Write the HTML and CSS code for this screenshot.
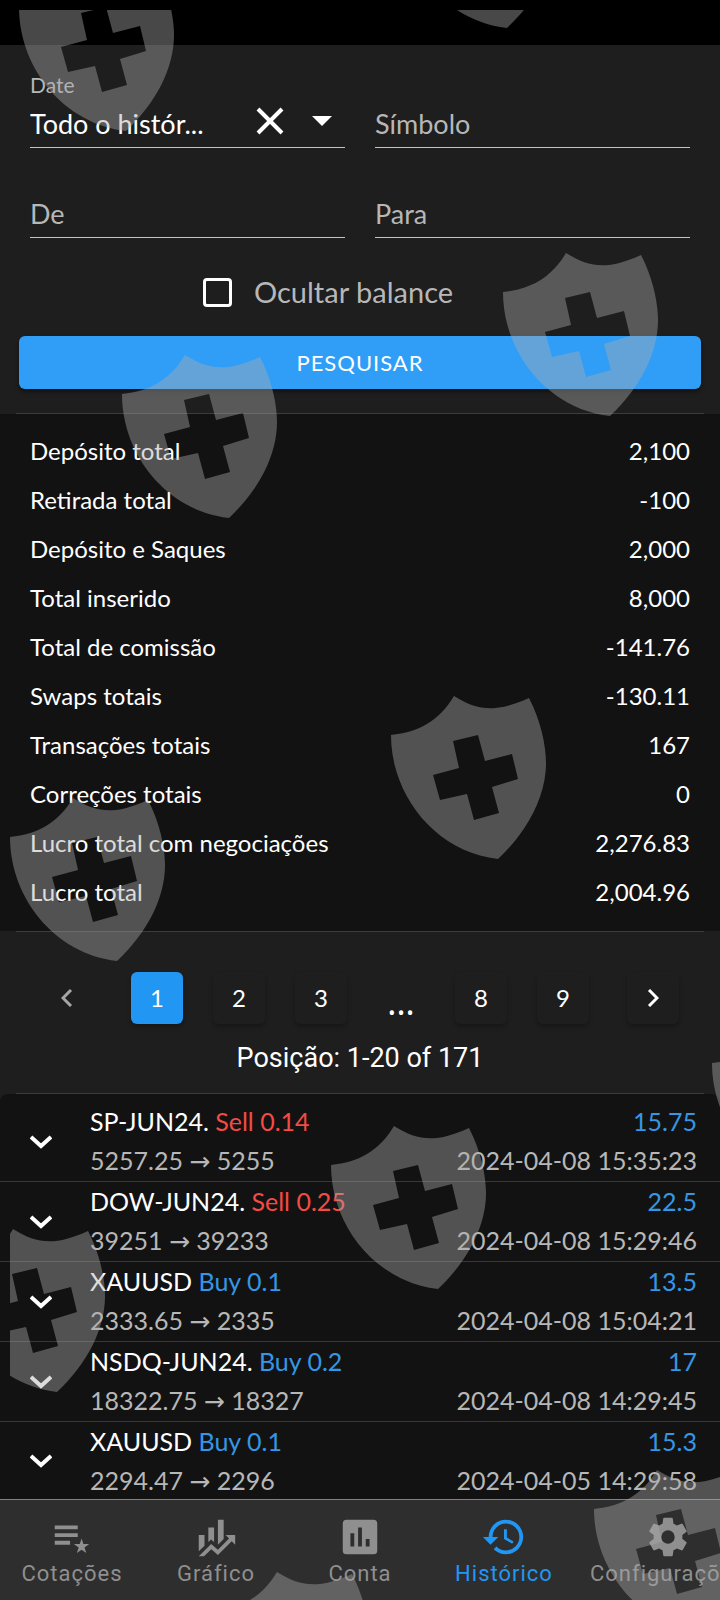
FILE: index.html
```html
<!DOCTYPE html>
<html lang="pt">
<head>
<meta charset="utf-8">
<meta name="viewport" content="width=device-width, initial-scale=1">
<title>Histórico</title>
<link rel="stylesheet" href="styles.css">
</head>
<body>
<div class="app">
  <div class="status-bar"></div>
  <main class="content">
    <form class="filters">
      <div class="fields">
        <div class="field">
          <label class="field-label" for="date">Date</label>
          <div class="field-row">
            <select class="field-select" id="date"><option>Todo o histór...</option></select>
            <button class="icon-button" type="button" aria-label="Limpar">
              <svg class="clear-icon" viewBox="0 0 28 28"><path d="M2 2 26 26M26 2 2 26"/></svg>
            </button>
            <svg class="caret-icon" viewBox="0 0 20 10" aria-hidden="true"><path d="M0 0h20L10 10z"/></svg>
          </div>
        </div>
        <div class="field"><input class="field-input" type="text" placeholder="Símbolo" aria-label="Símbolo"></div>
        <div class="field"><input class="field-input" type="text" placeholder="De" aria-label="De"></div>
        <div class="field"><input class="field-input" type="text" placeholder="Para" aria-label="Para"></div>
      </div>
      <label class="check"><input class="check-box" type="checkbox">Ocultar balance</label>
      <button class="search" type="button">PESQUISAR</button>
    </form>

    <hr class="divider">
    <dl class="summary">
      <div class="sum-row"><dt>Depósito total</dt><dd>2,100</dd></div>
      <div class="sum-row"><dt>Retirada total</dt><dd>-100</dd></div>
      <div class="sum-row"><dt>Depósito e Saques</dt><dd>2,000</dd></div>
      <div class="sum-row"><dt>Total inserido</dt><dd>8,000</dd></div>
      <div class="sum-row"><dt>Total de comissão</dt><dd>-141.76</dd></div>
      <div class="sum-row"><dt>Swaps totais</dt><dd>-130.11</dd></div>
      <div class="sum-row"><dt>Transações totais</dt><dd>167</dd></div>
      <div class="sum-row"><dt>Correções totais</dt><dd>0</dd></div>
      <div class="sum-row"><dt>Lucro total com negociações</dt><dd>2,276.83</dd></div>
      <div class="sum-row"><dt>Lucro total</dt><dd>2,004.96</dd></div>
    </dl>
    <hr class="divider">

    <section class="paging">
      <div class="pages">
        <button class="page page-prev" type="button" disabled aria-label="Anterior"><svg class="page-icon" viewBox="0 0 12 18"><path d="M10 1 2 9l8 8"/></svg></button>
        <button class="page page-current" type="button">1</button>
        <button class="page" type="button">2</button>
        <button class="page" type="button">3</button>
        <span class="dots">...</span>
        <button class="page" type="button">8</button>
        <button class="page" type="button">9</button>
        <button class="page page-next" type="button" aria-label="Próxima"><svg class="page-icon" viewBox="0 0 12 18"><path d="m2 1 8 8-8 8"/></svg></button>
      </div>
      <p class="position">Posição: 1-20 of 171</p>
    </section>
    <hr class="divider">

    <ul class="deals">
      <li class="deal">
        <button class="expand" type="button" aria-label="Detalhes"><svg class="expand-icon" viewBox="0 0 22 14"><path d="m1 2 10 9 10-9"/></svg></button>
        <div class="deal-main"><p>SP-JUN24. <span class="sell">Sell 0.14</span></p><p class="muted">5257.25 <span class="arrow">→</span> 5255</p></div>
        <div class="deal-side"><p class="buy">15.75</p><p class="muted">2024-04-08 15:35:23</p></div>
      </li>
      <li class="deal">
        <button class="expand" type="button" aria-label="Detalhes"><svg class="expand-icon" viewBox="0 0 22 14"><path d="m1 2 10 9 10-9"/></svg></button>
        <div class="deal-main"><p>DOW-JUN24. <span class="sell">Sell 0.25</span></p><p class="muted">39251 <span class="arrow">→</span> 39233</p></div>
        <div class="deal-side"><p class="buy">22.5</p><p class="muted">2024-04-08 15:29:46</p></div>
      </li>
      <li class="deal">
        <button class="expand" type="button" aria-label="Detalhes"><svg class="expand-icon" viewBox="0 0 22 14"><path d="m1 2 10 9 10-9"/></svg></button>
        <div class="deal-main"><p>XAUUSD <span class="buy">Buy 0.1</span></p><p class="muted">2333.65 <span class="arrow">→</span> 2335</p></div>
        <div class="deal-side"><p class="buy">13.5</p><p class="muted">2024-04-08 15:04:21</p></div>
      </li>
      <li class="deal">
        <button class="expand" type="button" aria-label="Detalhes"><svg class="expand-icon" viewBox="0 0 22 14"><path d="m1 2 10 9 10-9"/></svg></button>
        <div class="deal-main"><p>NSDQ-JUN24. <span class="buy">Buy 0.2</span></p><p class="muted">18322.75 <span class="arrow">→</span> 18327</p></div>
        <div class="deal-side"><p class="buy">17</p><p class="muted">2024-04-08 14:29:45</p></div>
      </li>
      <li class="deal">
        <button class="expand" type="button" aria-label="Detalhes"><svg class="expand-icon" viewBox="0 0 22 14"><path d="m1 2 10 9 10-9"/></svg></button>
        <div class="deal-main"><p>XAUUSD <span class="buy">Buy 0.1</span></p><p class="muted">2294.47 <span class="arrow">→</span> 2296</p></div>
        <div class="deal-side"><p class="buy">15.3</p><p class="muted">2024-04-05 14:29:58</p></div>
      </li>
    </ul>
  </main>

  <nav class="nav">
    <a class="nav-item" href="#cotacoes"><svg class="nav-icon" viewBox="0 0 24 24"><path d="M3 6h12v2H3zM3 10h12v2H3zM3 14h8v2H3zM17 12.8l.94 2.9H21l-2.48 1.8.95 2.9L17 18.6l-2.47 1.8.95-2.9L13 15.7h3.06z"/></svg>Cotações</a>
    <a class="nav-item" href="#grafico"><svg class="nav-icon" viewBox="0 0 24 24"><path d="M6 16.5 3 19.44V11h3M11 14.66l-1.57-1.34L8 14.64V7h3M16 13l-3 3V3h3M18.81 12.81 17 11h5v5l-1.79-1.79L13 21.36l-3.47-3.02L5.75 22H3l6.47-6.34L13 18.64"/></svg>Gráfico</a>
    <a class="nav-item" href="#conta"><svg class="nav-icon" viewBox="0 0 24 24"><path d="M9 17H7v-7h2m4 7h-2V7h2m4 10h-2v-4h2m2-10H5a2 2 0 0 0-2 2v14a2 2 0 0 0 2 2h14a2 2 0 0 0 2-2V5a2 2 0 0 0-2-2z" fill-rule="evenodd"/></svg>Conta</a>
    <a class="nav-item nav-active" href="#historico"><svg class="nav-icon" viewBox="0 0 24 24"><path d="M13.5 8H12v5l4.28 2.54.72-1.21-3.5-2.08V8M13 3a9 9 0 0 0-9 9H1l3.96 4.03L9 12H6a7 7 0 1 1 7 7c-1.93 0-3.68-.79-4.94-2.06l-1.42 1.42A8.96 8.96 0 0 0 13 21a9 9 0 0 0 0-18"/></svg>Histórico</a>
    <a class="nav-item" href="#config"><svg class="nav-icon" viewBox="0 0 24 24"><path d="M12 15.5A3.5 3.5 0 0 1 8.5 12 3.5 3.5 0 0 1 12 8.5a3.5 3.5 0 0 1 3.5 3.5 3.5 3.5 0 0 1-3.5 3.5m7.43-2.53c.04-.32.07-.64.07-.97s-.03-.66-.07-1l2.11-1.63c.19-.15.24-.42.12-.64l-2-3.46c-.12-.22-.39-.31-.61-.22l-2.49 1c-.52-.39-1.06-.73-1.69-.98l-.37-2.65A.506.506 0 0 0 14 2h-4c-.25 0-.46.18-.5.42l-.37 2.65c-.63.25-1.17.59-1.69.98l-2.49-1c-.22-.09-.49 0-.61.22l-2 3.46c-.13.22-.07.49.12.64L4.57 11c-.04.34-.07.67-.07 1s.03.65.07.97l-2.11 1.66c-.19.15-.25.42-.12.64l2 3.46c.12.22.39.3.61.22l2.49-1.01c.52.4 1.06.74 1.69.99l.37 2.65c.04.24.25.42.5.42h4c.25 0 .46-.18.5-.42l.37-2.65c.63-.26 1.17-.59 1.69-.99l2.49 1.01c.22.08.49 0 .61-.22l2-3.46c.12-.22.07-.49-.12-.64z"/></svg>Configurações</a>
  </nav>

  <div class="watermark" aria-hidden="true">
    <svg class="watermark-canvas">
      <defs>
        <path id="shield" fill-rule="evenodd" d="M0 39C28 36 48 25 63 0 87 15 105 17 138 2 150 25 155 50 155 67 155 100 137 135 107 163 45 156 0 100 0 39zM62 45 87 39 94 65 121 58 127 83 101 91 108 117 83 124 76 98 49 104 42 79 68 72z"/>
      </defs>
      <use href="#shield" x="9" y="-42"/>
      <use href="#shield" x="390" y="-145"/>
      <use href="#shield" x="493" y="243"/>
      <use href="#shield" x="112" y="345"/>
      <use href="#shield" x="381" y="686"/>
      <use href="#shield" x="0" y="788"/>
      <use href="#shield" x="702" y="1014"/>
      <use href="#shield" x="321" y="1116"/>
      <use href="#shield" x="-60" y="1219"/>
      <use href="#shield" x="584" y="1460"/>
      <use href="#shield" x="204" y="1562"/>
    </svg>
  </div>
</div>
</body>
</html>
```
FILE: styles.css
```css
* { box-sizing: border-box; margin: 0; padding: 0; }

body { background: #121212; }

button, input, select { font: inherit; color: inherit; border: 0; background: none; }

.app {
  position: relative;
  display: flex;
  flex-direction: column;
  height: 100vh;
  overflow: hidden;
  color: #fff;
  font-family: Lato, "Noto Sans", sans-serif;
  font-size: 27px;
  line-height: 32px;
}

.status-bar { flex: none; height: 45px; background: #000; }

.content { flex: 1; min-height: 0; overflow-y: auto; scrollbar-width: none; background: #1e1e1e; }

.filters { display: flex; flex-direction: column; padding: 24px 19px; }

.fields { display: grid; grid-template-columns: 1fr 1fr; gap: 30px; padding: 0 11px; }

.field { display: flex; flex-direction: column; justify-content: flex-end; min-width: 0; min-height: 60px; border-bottom: 1px solid #c4c4c4; }
.field-label { padding-top: 6px; font-size: 21px; line-height: 20px; color: #b7b7b7; }
.field-row { display: flex; align-items: center; height: 52px; padding-right: 13px; }
.field-select { flex: 1; min-width: 0; height: 52px; padding-top: 6px; appearance: none; }
.field-input { width: 100%; height: 48px; outline: 0; }
.field-input::placeholder { color: #b7b7b7; opacity: 1; }

.icon-button { display: flex; margin-right: 28px; }
.clear-icon { width: 28px; height: 28px; stroke: #fff; stroke-width: 4; }
.caret-icon { width: 20px; height: 10px; fill: #fff; }

.check { display: flex; align-items: center; justify-content: center; gap: 22px; height: 56px; margin-top: 26px; padding-right: 64px; color: #b7b7b7; font-size: 29px; }
.check-box { width: 29px; height: 29px; appearance: none; border: 3px solid #fff; border-radius: 4px; }

.search { height: 53px; margin-top: 16px; border-radius: 6px; background: #309ef7; font-size: 22px; letter-spacing: 1px; box-shadow: 0 3px 4px #0006; }

.divider { height: 1px; margin: 0 16px; border: 0; background: #3c3c3c; }

.summary { padding: 12px 30px 15px; background: #121212; }
.sum-row { display: flex; justify-content: space-between; font-size: 24px; line-height: 49px; }

.paging { display: flex; flex-direction: column; align-items: center; padding: 40px 0 19px; }
.pages { display: flex; gap: 30px; }
.page { display: flex; align-items: center; justify-content: center; width: 52px; height: 52px; border-radius: 6px; font-size: 24px; box-shadow: 0 3px 4px #0004; }
.page-current { background: #2196f3; }
.page-prev { margin-right: 8px; color: #a5a5a5; box-shadow: none; }
.page-next { margin-left: 8px; }
.page-icon { width: 12px; height: 18px; fill: none; stroke: currentColor; stroke-width: 3; }
.dots { width: 28px; margin: 0 10px; padding-top: 14px; text-align: center; font-family: "Noto Sans", sans-serif; font-size: 34px; }
.position { margin-top: 18px; font-family: Roboto, sans-serif; font-size: 27px; }

.deals { padding-top: 8px; list-style: none; background: #121212; border-radius: 8px 8px 0 0; }
.deal { display: flex; align-items: flex-start; height: 80px; padding-right: 23px; font-size: 25px; line-height: 39px; border-bottom: 1px solid #383838; }
.deal:last-child { height: 78px; border-bottom: 0; }
.deal-main { flex: 1; }
.deal-side { text-align: right; }
.expand { display: flex; align-self: center; justify-content: center; width: 82px; margin-right: 8px; }
.expand-icon { width: 22px; height: 14px; fill: none; stroke: #fff; stroke-width: 4; }
.muted { color: #b7b7b7; }
.sell { color: #f44b44; }
.buy { color: #3596e6; }
.arrow { font-family: "DejaVu Sans", sans-serif; line-height: 24px; }

.nav { display: flex; flex: none; height: 101px; overflow: hidden; border-top: 1px solid #828282; background: #2e2e2e; }
.nav-item { display: flex; flex: none; flex-direction: column; align-items: center; min-width: 20%; padding: 14px 14px 0; color: #8f8f8f; font-family: Roboto, sans-serif; font-size: 22px; line-height: 28px; letter-spacing: 1px; text-decoration: none; }
.nav-icon { width: 46px; height: 46px; fill: currentColor; }
.nav-active { color: #2196f3; }

.watermark { position: absolute; inset: 10px 0 0 10px; overflow: hidden; pointer-events: none; }
.watermark-canvas { display: block; width: 100%; height: 100%; fill: #adadad; opacity: 0.42; }
```
